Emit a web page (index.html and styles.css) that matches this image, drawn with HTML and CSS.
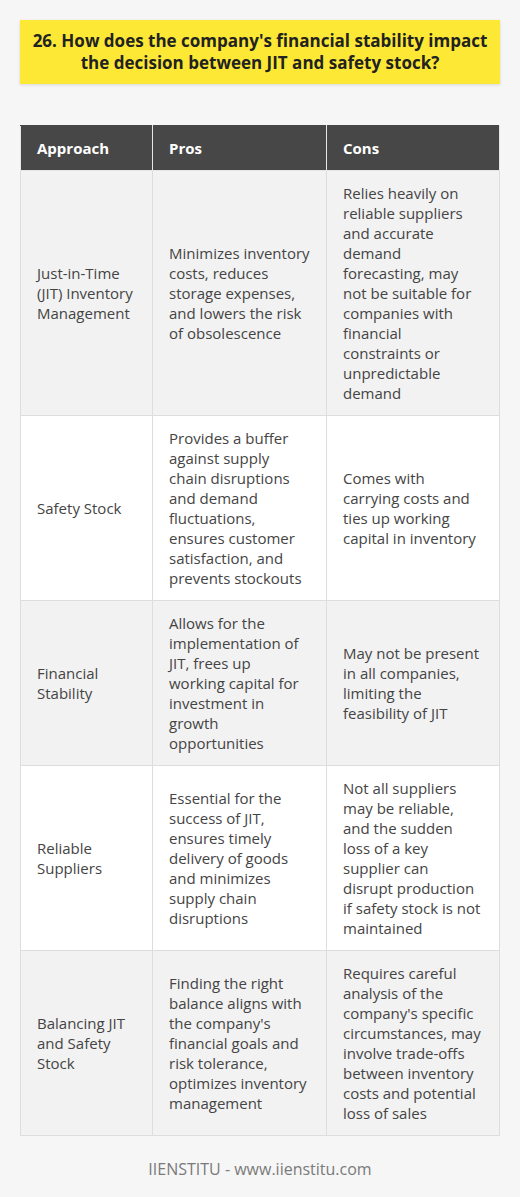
FILE: index.html
```html
<!DOCTYPE html>
<html lang="en">
<head>
<meta charset="utf-8">
<title>JIT vs Safety Stock</title>
<link rel="stylesheet" href="styles.css">
</head>
<body>
<div class="page">
  <h1 class="title">26. How does the company's financial stability impact the decision between JIT and safety stock?</h1>
  <table class="grid">
    <colgroup>
      <col class="c1"><col class="c2"><col class="c3">
    </colgroup>
    <thead>
      <tr><th>Approach</th><th>Pros</th><th>Cons</th></tr>
    </thead>
    <tbody>
      <tr>
        <td>Just-in-Time (JIT) Inventory Management</td>
        <td>Minimizes inventory costs, reduces storage expenses, and lowers the risk of obsolescence</td>
        <td>Relies heavily on reliable suppliers and accurate demand forecasting, may not be suitable for companies with financial constraints or unpredictable demand</td>
      </tr>
      <tr>
        <td>Safety Stock</td>
        <td>Provides a buffer against supply chain disruptions and demand fluctuations, ensures customer satisfaction, and prevents stockouts</td>
        <td>Comes with carrying costs and ties up working capital in inventory</td>
      </tr>
      <tr>
        <td>Financial Stability</td>
        <td>Allows for the implementation of JIT, frees up working capital for investment in growth opportunities</td>
        <td>May not be present in all companies, limiting the feasibility of JIT</td>
      </tr>
      <tr>
        <td>Reliable Suppliers</td>
        <td>Essential for the success of JIT, ensures timely delivery of goods and minimizes supply chain disruptions</td>
        <td>Not all suppliers may be reliable, and the sudden loss of a key supplier can disrupt production if safety stock is not maintained</td>
      </tr>
      <tr>
        <td>Balancing JIT and Safety Stock</td>
        <td>Finding the right balance aligns with the company's financial goals and risk tolerance, optimizes inventory management</td>
        <td>Requires careful analysis of the company's specific circumstances, may involve trade-offs between inventory costs and potential loss of sales</td>
      </tr>
    </tbody>
  </table>
  <p class="footer">IIENSTITU - www.iienstitu.com</p>
</div>
</body>
</html>
```

FILE: styles.css
```css
* { box-sizing: border-box; }
html, body {
  margin: 0;
  padding: 0;
  background: #f6f6f6;
}
body {
  font-family: "Open Sans", "Noto Sans", sans-serif;
  color: #444;
}
.page {
  padding: 20px 20px 0 20px;
}
.title {
  margin: 0;
  background: #fde935;
  color: #222;
  font-size: 17px;
  font-weight: 700;
  line-height: 22px;
  text-align: center;
  padding: 10px 8px;
  box-shadow: 0 1px 3px rgba(0,0,0,0.12);
}
.grid {
  margin-top: 41px;
  width: 479px;
  border-collapse: collapse;
  table-layout: fixed;
  font-size: 15px;
  line-height: 20px;
}
.c1 { width: 132px; }
.c2 { width: 174px; }
.c3 { width: 173px; }
.grid th {
  background: #474747;
  color: #fff;
  font-weight: 700;
  text-align: left;
  padding: 12px 16px;
  border: 1px solid #e6e6e6;
  border-top-color: #474747;
}
.grid td {
  padding: 12px 16px;
  border: 1px solid #dddddd;
  vertical-align: middle;
  color: #444;
}
.grid td:nth-child(3) {
  padding-right: 17px;
}
.grid tbody tr:nth-child(odd) td { background: #f2f2f2; }
.grid tbody tr:nth-child(even) td { background: #ffffff; }
.footer {
  margin: 23px 0 0 0;
  text-align: center;
  font-size: 16px;
  line-height: 20px;
  color: #7a7a7a;
}
```
